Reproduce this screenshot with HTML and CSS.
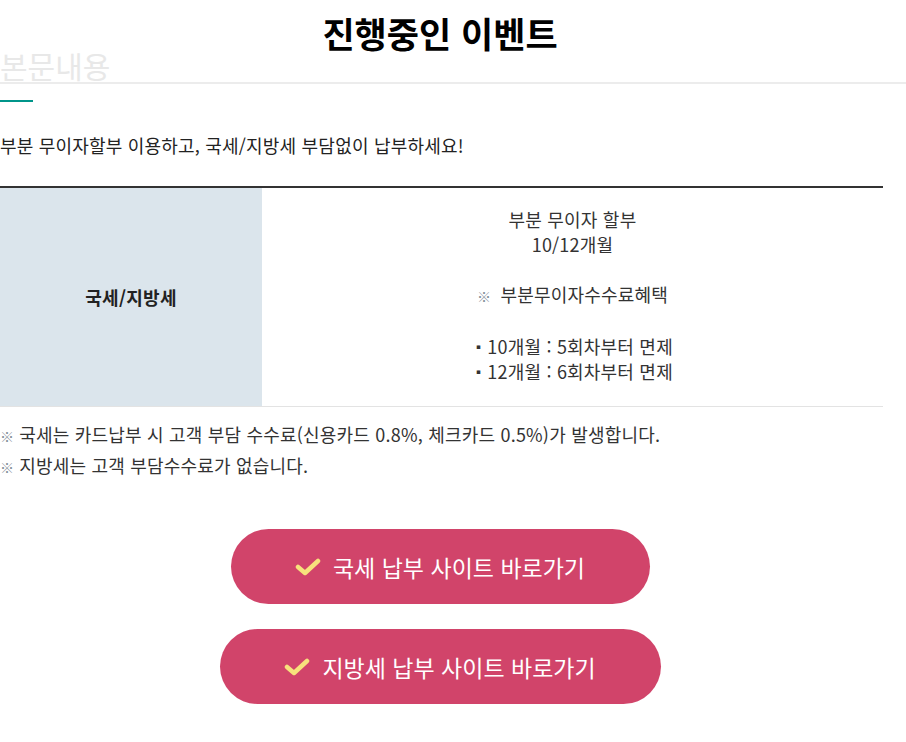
FILE: index.html
```html
<!DOCTYPE html>
<html lang="ko">
<head>
    <meta charset="UTF-8">
    <meta name="viewport" content="width=device-width, initial-scale=1.0">
    <title>진행중인 이벤트</title>
    <link rel="stylesheet" href="styles.css">
</head>
<body>
    <header class="page-head">
        <h1>진행중인 이벤트</h1>
        <div class="ghost">본문내용</div>
    </header>
    <div class="accent"></div>

    <p class="lead">부분 무이자할부 이용하고, 국세/지방세 부담없이 납부하세요!</p>

    <table class="info">
        <tr>
            <th>국세/지방세</th>
            <td>
                <p>부분 무이자 할부<br>10/12개월</p>
                <p><span class="mark">※</span> 부분무이자수수료혜택</p>
                <p><span class="dot">▪</span>10개월 : 5회차부터 면제<br><span class="dot">▪</span>12개월 : 6회차부터 면제</p>
            </td>
        </tr>
    </table>

    <ul class="notes">
        <li><span class="mark">※</span>국세는 카드납부 시 고객 부담 수수료(신용카드 0.8%, 체크카드 0.5%)가 발생합니다.</li>
        <li><span class="mark">※</span>지방세는 고객 부담수수료가 없습니다.</li>
    </ul>

    <div class="links">
        <a class="go go-national" href="#">
            <svg width="26" height="20" viewBox="0 0 26 20"><path d="M3 10 L10 16 L23 4" fill="none" stroke="#f7e27c" stroke-width="4.5" stroke-linecap="round" stroke-linejoin="round"/></svg>
            국세 납부 사이트 바로가기
        </a>
        <a class="go go-local" href="#">
            <svg width="26" height="20" viewBox="0 0 26 20"><path d="M3 10 L10 16 L23 4" fill="none" stroke="#f7e27c" stroke-width="4.5" stroke-linecap="round" stroke-linejoin="round"/></svg>
            지방세 납부 사이트 바로가기
        </a>
    </div>
</body>
</html>
```

FILE: styles.css
```css
body {
    margin: 0;
    font-family: "Noto Sans CJK KR", "Noto Sans", sans-serif;
    color: #333;
    background: #fff;
}
.page-head {
    border-bottom: 2px solid #ececec;
    height: 82px;
}
h1 {
    margin: 0;
    padding-top: 8px;
    text-align: center;
    font-size: 35px;
    line-height: 50px;
    font-weight: bold;
    color: #000;
    padding-right: 26px;
}
.ghost {
    margin-top: -8px;
    font-size: 30px;
    line-height: 30px;
    color: #e8e8e8;
}
.accent {
    width: 33px;
    height: 2px;
    margin-top: 16px;
    background: #00958a;
}
.lead {
    margin: 30px 0 0;
    font-size: 18px;
    line-height: 26px;
    letter-spacing: 0.2px;
    color: #222;
}
.info {
    margin-top: 28px;
    width: 883px;
    border-collapse: collapse;
    border-top: 2px solid #333;
    border-bottom: 1px solid #e3e3e3;
    font-size: 18px;
}
.info th {
    width: 262px;
    height: 218px;
    padding: 0;
    background: #dbe5ec;
    font-weight: bold;
    color: #222;
    font-size: 18px;
    letter-spacing: 0.3px;
}
.info td {
    text-align: center;
    padding: 6px 0 10px;
    line-height: 25px;
    letter-spacing: 0.2px;
}
.info td p {
    margin: 0 0 25px;
}
.info td p:last-child {
    margin-bottom: 0;
}
.dot {
    font-size: 13px;
    margin-right: 2px;
    vertical-align: 2px;
}
.mark {
    color: #848f9a;
    font-size: 14px;
    margin-right: 4px;
}
.notes {
    list-style: none;
    margin: 13px 0 0;
    padding: 0;
    font-size: 18px;
    line-height: 29px;
    letter-spacing: 0.2px;
}
.notes .mark {
    margin-right: 5px;
}
.links {
    display: flex;
    flex-direction: column;
    align-items: center;
    gap: 25px;
    margin-top: 47px;
    padding-right: 26px;
}
.go {
    display: flex;
    align-items: center;
    justify-content: center;
    gap: 12px;
    height: 75px;
    border-radius: 38px;
    background: #d1446a;
    color: #fff;
    font-size: 23px;
    text-decoration: none;
}
.go-national {
    width: 419px;
}
.go-local {
    width: 441px;
}
```
